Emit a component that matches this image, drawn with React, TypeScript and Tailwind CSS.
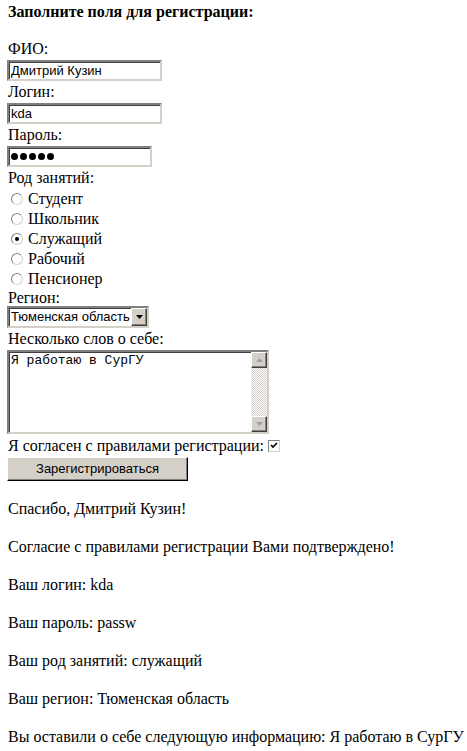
const serif = "font-['Liberation_Serif','Times_New_Roman',serif]";
const sans = "font-['Liberation_Sans',Arial,sans-serif]";
const mono = "font-['Liberation_Mono','Courier_New',monospace]";

const inset =
  "border-2 border-t-[#808080] border-l-[#808080] border-b-[#d4d0c8] border-r-[#d4d0c8] shadow-[inset_1px_1px_0_#404040]";

function Field({ value, width }: { value: string; width: string }) {
  return (
    <div
      className={`${inset} ${width} h-[21px] bg-white pl-[2px] text-[13px] leading-[17px] text-black ${sans}`}
    >
      {value}
    </div>
  );
}

function Radio({ checked, label }: { checked?: boolean; label: string }) {
  return (
    <div className="flex h-[20px] items-center pl-[4px]">
      <span className="relative mr-[5px] h-[12px] w-[12px] rounded-full border border-t-[#808080] border-l-[#808080] border-b-[#d4d0c8] border-r-[#d4d0c8] bg-white">
        {checked ? (
          <span className="absolute left-[3px] top-[3px] h-[4px] w-[4px] rounded-full bg-black" />
        ) : null}
      </span>
      <span>{label}</span>
    </div>
  );
}

function ScrollArrow({ up }: { up?: boolean }) {
  return (
    <div className="flex h-[16px] w-[16px] items-center justify-center border border-t-[#ffffff] border-l-[#ffffff] border-b-[#404040] border-r-[#404040] bg-[#d4d0c8] shadow-[inset_-1px_-1px_0_#808080]">
      <svg width="7" height="4" viewBox="0 0 7 4">
        {up ? (
          <path d="M3.5 0 L7 4 L0 4 Z" fill="#a0a0a0" />
        ) : (
          <path d="M0 0 L7 0 L3.5 4 Z" fill="#a0a0a0" />
        )}
      </svg>
    </div>
  );
}

export default function App() {
  const results = [
    "Спасибо, Дмитрий Кузин!",
    "Согласие с правилами регистрации Вами подтверждено!",
    "Ваш логин: kda",
    "Ваш пароль: passw",
    "Ваш род занятий: служащий",
    "Ваш регион: Тюменская область",
    "Вы оставили о себе следующую информацию: Я работаю в СурГУ",
  ];

  return (
    <div className={`min-h-[751px] overflow-hidden bg-white px-[7px] text-[16px] text-black ${serif}`}>
      <div className="h-[38px] pt-[3px] pl-[1px] text-[16px] font-bold leading-[18px]">
        Заполните поля для регистрации:
      </div>

      <div className="h-[22px] pl-[1px] leading-[22px]">ФИО:</div>
      <Field value="Дмитрий Кузин" width="w-[155px]" />
      <div className="h-[22px] pl-[1px] leading-[22px]">Логин:</div>
      <Field value="kda" width="w-[155px]" />
      <div className="h-[22px] pl-[1px] leading-[22px]">Пароль:</div>
      <div
        className={`${inset} flex h-[21px] w-[145px] items-center gap-[2px] bg-white pl-[2px]`}
      >
        {[0, 1, 2, 3, 4].map((i) => (
          <span key={i} className="h-[7px] w-[7px] rounded-full bg-black" />
        ))}
      </div>

      <div className="h-[22px] pl-[1px] leading-[22px]">Род занятий:</div>
      <Radio label="Студент" />
      <Radio label="Школьник" />
      <Radio checked label="Служащий" />
      <Radio label="Рабочий" />
      <Radio label="Пенсионер" />

      <div className="h-[17px] pl-[1px] leading-[17px]">Регион:</div>
      <div className={`${inset} flex h-[22px] w-[142px] items-stretch bg-white`}>
        <span className={`flex-1 pl-[2px] text-[13px] leading-[17px] ${sans}`}>
          Тюменская область
        </span>
        <span className="flex w-[16px] items-center justify-center border border-t-[#ffffff] border-l-[#ffffff] border-b-[#404040] border-r-[#404040] bg-[#d4d0c8] shadow-[inset_-1px_-1px_0_#808080]">
          <svg width="7" height="4" viewBox="0 0 7 4">
            <path d="M0 0 L7 0 L3.5 4 Z" fill="#000" />
          </svg>
        </span>
      </div>

      <div className="h-[22px] pl-[1px] leading-[22px]">Несколько слов о себе:</div>
      <div className={`${inset} flex h-[84px] w-[262px] bg-white`}>
        <div className={`flex-1 pl-[2px] pt-[1px] text-[13px] leading-[15px] ${mono}`}>
          Я работаю в СурГУ
        </div>
        <div className="flex w-[16px] flex-col bg-[repeating-conic-gradient(#d4d0c8_0%_25%,#ffffff_0%_50%)] bg-[length:2px_2px]">
          <ScrollArrow up />
          <div className="flex-1" />
          <ScrollArrow />
        </div>
      </div>

      <div className="flex h-[23px] items-center pl-[1px]">
        <span>Я согласен с правилами регистрации:</span>
        <span className="ml-[4px] flex h-[12px] w-[12px] items-center justify-center border border-t-[#808080] border-l-[#808080] border-b-[#d4d0c8] border-r-[#d4d0c8] bg-white">
          <svg width="8" height="7" viewBox="0 0 8 7">
            <path d="M1 3 L3 5 L7 1" stroke="#000" strokeWidth="1.6" fill="none" />
          </svg>
        </span>
      </div>

      <div
        className={`flex h-[24px] w-[181px] items-center justify-center border border-t-[#ffffff] border-l-[#ffffff] border-b-[#000000] border-r-[#000000] bg-[#d4d0c8] text-[13px] shadow-[inset_-1px_-1px_0_#808080] ${sans}`}
      >
        Зарегистрироваться
      </div>

      <div className="pt-[17px] pl-[1px]">
        {results.map((line) => (
          <p key={line} className="mb-[16px] h-[22px] whitespace-nowrap leading-[22px]">
            {line}
          </p>
        ))}
      </div>
    </div>
  );
}
